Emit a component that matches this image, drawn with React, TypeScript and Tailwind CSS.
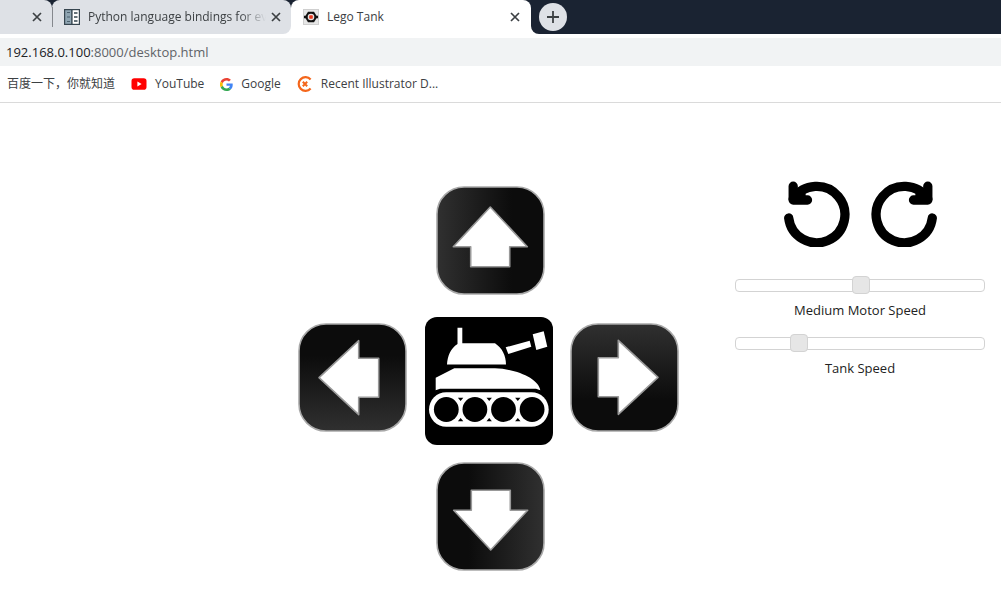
import { useState } from "react";

function Close({ label }: { label: string }) {
  return (
    <button type="button" aria-label={label} className="flex size-4 shrink-0 items-center justify-center">
      <svg viewBox="0 0 10 10" className="size-[10px]" fill="none" stroke="#3c4043" strokeWidth="1.7">
        <path d="M1 1l8 8M9 1l-8 8" />
      </svg>
    </button>
  );
}

function DocsIcon() {
  return (
    <svg viewBox="0 0 16 16" className="size-4 shrink-0">
      <rect width="16" height="16" fill="#36454f" />
      <rect x="1.2" y="1.2" width="6" height="13.6" fill="#8fa5b2" />
      <rect x="8.6" y="1.2" width="6.2" height="13.6" fill="#fff" />
      <path d="M3 3.5h3M3 8h3M3 12.5h3" stroke="#4d616e" strokeWidth="1.2" />
      <path d="M10 4h3.5M10 8h3.5M10 12h3.5" stroke="#36454f" strokeWidth="1.6" />
    </svg>
  );
}

function RobotIcon() {
  return (
    <svg viewBox="0 0 16 16" className="size-4 shrink-0">
      <rect x="0.5" y="0.5" width="15" height="15" fill="#e6e6e6" stroke="#cfcfcf" />
      <path d="M1 6.800h1.500L5 2.800h6l2.500 4H15v2.400h-1.500L11 13.200H5L2.500 9.200H1z" fill="#111" />
      <circle cx="8" cy="8" r="3.3" fill="#e9e2e0" />
      <rect x="6.200" y="6.200" width="3.600" height="3.600" rx="0.8" fill="#e8361c" />
    </svg>
  );
}

function YouTubeIcon() {
  return (
    <svg viewBox="0 0 16 16" className="size-4 shrink-0">
      <rect x="0.5" y="2.300" width="15" height="11.400" rx="2.800" fill="#f00" />
      <path d="M6.400 5.600v4.800L10.600 8z" fill="#fff" />
    </svg>
  );
}

function GoogleIcon() {
  return (
    <svg viewBox="0 0 48 48" className="size-[13px] shrink-0">
      <path fill="#EA4335" d="M24 9.500c3.540 0 6.710 1.220 9.210 3.600l6.850-6.850C35.900 2.380 30.470 0 24 0 14.620 0 6.510 5.380 2.560 13.220l7.980 6.190C12.430 13.720 17.740 9.500 24 9.500z" />
      <path fill="#4285F4" d="M46.980 24.550c0-1.570-.15-3.090-.38-4.550H24v9.020h12.940c-.58 2.960-2.260 5.480-4.780 7.180l7.730 6c4.510-4.180 7.090-10.360 7.090-17.650z" />
      <path fill="#FBBC05" d="M10.530 28.590a14.500 14.500 0 0 1 0-9.180l-7.980-6.190a24 24 0 0 0 0 21.560l7.980-6.190z" />
      <path fill="#34A853" d="M24 48c6.480 0 11.930-2.130 15.890-5.810l-7.730-6c-2.150 1.450-4.920 2.300-8.160 2.300-6.260 0-11.570-4.220-13.470-9.910l-7.980 6.190C6.510 42.620 14.620 48 24 48z" />
    </svg>
  );
}

function DesignIcon() {
  return (
    <svg viewBox="0 0 16 16" className="size-4 shrink-0" fill="none" stroke="#f4661b">
      <path d="M13.600 3.500A6.800 6.800 0 1 0 13.600 12.500" strokeWidth="2.200" />
      <path d="M5.800 5.800l4.400 4.400M10.200 5.800l-4.400 4.400" strokeWidth="2" />
    </svg>
  );
}

type Turn = "up" | "right" | "down" | "left";

const turns: Record<Turn, string> = {
  up: "rotate-0",
  right: "rotate-90",
  down: "rotate-180",
  left: "-rotate-90",
};

function ArrowButton({ turn, label }: { turn: Turn; label: string }) {
  const id = `shade-${turn}`;
  return (
    <button type="button" aria-label={label} className="block size-[109px]">
      <svg viewBox="0 0 109 109" className={`block size-full ${turns[turn]}`}>
        <defs>
          <linearGradient id={id} x1="0" x2="1" y1="0" y2="0">
            <stop offset="0" stopColor="#303030" />
            <stop offset="0.7" stopColor="#0c0c0c" />
            <stop offset="1" stopColor="#0c0c0c" />
          </linearGradient>
        </defs>
        <rect x="1" y="1" width="107" height="107" rx="27" fill={`url(#${id})`} stroke="#a8a8a8" strokeWidth="1.600" />
        <path
          d="M54.300 21L91.300 60.700H73.700V80.700H34.700V60.700H17.300z"
          fill="#fff"
          stroke="#999"
          strokeWidth="1.600"
          strokeLinejoin="round"
        />
      </svg>
    </button>
  );
}

const wheels = [21.3, 49.9, 78.5, 107.1];
const gaps = [35.6, 64.2, 92.8];

function Tank() {
  return (
    <svg viewBox="0 0 128 128" className="block size-32" role="img" aria-label="Tank">
      <rect width="128" height="128" rx="12" fill="#000" />
      <g fill="#fff">
        <path d="M32.500 10.700h4.800V26.200H70C77 31 81 38 81 47.600H22C22.500 39 25.500 31.500 32.500 27z" />
        <path d="M80.700 30.300L104.700 23.700L106.300 29.700L83.300 37z" />
        <path d="M107.700 17.300L118.700 14.300L122.300 29.700L111.300 33z" />
        <path d="M10.700 60.700L29.300 51.300H70C92 52 114 62 115.300 73.300L111 71.700H15L10.700 73.300z" />
        <rect x="4" y="75.300" width="119.700" height="34.400" rx="17.200" />
      </g>
      {wheels.map((x) => (
        <circle key={x} cx={x} cy="92.500" r="12.400" fill="#000" />
      ))}
      {gaps.map((x) => (
        <path key={x} d={`M${x - 2.7} 80.800h5.400l-2.700 3.200zM${x - 2.7} 104.200h5.400l-2.700-3.200z`} fill="#000" />
      ))}
    </svg>
  );
}

function TurnButton({ label, mirrored }: { label: string; mirrored?: boolean }) {
  return (
    <button type="button" aria-label={label}>
      <svg
        viewBox="0 0 66 66"
        className={mirrored ? "block size-[66px] -scale-x-100" : "block size-[66px]"}
        fill="none"
        stroke="#000"
        strokeWidth="9.300"
        strokeLinecap="round"
        strokeLinejoin="round"
      >
        <path d="M4.700 37A28.200 28.200 0 1 0 9.200 18" />
        <path d="M9.200 5.200V19H23.500M9.200 19L17 10.500V19z" />
      </svg>
    </button>
  );
}

function Slider({ id, label, initial }: { id: string; label: string; initial: number }) {
  const [value, setValue] = useState(initial);
  return (
    <div className="flex w-full flex-col items-center gap-[5px]">
      <input
        id={id}
        type="range"
        min={0}
        max={100}
        step={0.5}
        value={value}
        onChange={(e) => setValue(Number(e.target.value))}
        className="block h-[19px] w-full appearance-none bg-transparent [&::-webkit-slider-runnable-track]:h-[13px] [&::-webkit-slider-runnable-track]:rounded [&::-webkit-slider-runnable-track]:border [&::-webkit-slider-runnable-track]:border-[#d3d3d3] [&::-webkit-slider-runnable-track]:bg-white [&::-webkit-slider-thumb]:-mt-1 [&::-webkit-slider-thumb]:size-[18px] [&::-webkit-slider-thumb]:appearance-none [&::-webkit-slider-thumb]:rounded [&::-webkit-slider-thumb]:border [&::-webkit-slider-thumb]:border-[#d3d3d3] [&::-webkit-slider-thumb]:bg-[#e6e6e6]"
      />
      <label htmlFor={id} className="text-[13px] leading-5 text-[#222]">
        {label}
      </label>
    </div>
  );
}

export default function App() {
  return (
    <div className="min-h-screen bg-white font-['Open_Sans','Noto_Sans_CJK_SC',sans-serif] text-xs text-[#3c4043]">
      <header className="border-b border-[#dadada]">
        <div className="flex h-[34px] overflow-hidden bg-[#1a2332]">
          <div className="flex w-[52px] items-center justify-end rounded-tr-lg bg-[#dee1e6] pr-[7px]">
            <Close label="Close tab" />
          </div>
          <div className="flex bg-[linear-gradient(to_bottom,#1a2332_50%,#ffffff_50%)]">
            <div className="flex w-[239px] items-center rounded-t-lg rounded-br-lg bg-[linear-gradient(#dee1e6,#dee1e6)] pr-[7px]">
              <span className="h-5 w-px bg-[#85888d]" />
              <span className="ml-[11px]">
                <DocsIcon />
              </span>
              <span className="ml-2 min-w-0 flex-1 overflow-hidden whitespace-nowrap [mask-image:linear-gradient(to_right,#000_152px,transparent_178px)]">
                Python language bindings for ev3
              </span>
              <Close label="Close Python language bindings" />
            </div>
          </div>
          <div className="flex w-60 items-center rounded-t-lg bg-white pr-2 pl-3">
            <RobotIcon />
            <span className="ml-2 flex-1">Lego Tank</span>
            <Close label="Close Lego Tank" />
          </div>
          <div className="flex flex-1 bg-[linear-gradient(to_bottom,#1a2332_50%,#ffffff_50%)]">
            <div className="flex flex-1 items-center rounded-bl-lg bg-[#1a2332] pl-2">
              <button
                type="button"
                aria-label="New tab"
                className="flex size-7 items-center justify-center rounded-full bg-[#dee1e6]"
              >
                <svg viewBox="0 0 12 12" className="size-3" stroke="#3c4043" strokeWidth="1.800">
                  <path d="M6 0v12M0 6h12" />
                </svg>
              </button>
            </div>
          </div>
        </div>
        <div className="mt-1 flex h-7 items-center bg-[#f1f3f4] px-[6px] pt-px text-[13px]">
          <span className="text-[#202124]">192.168.0.100</span>
          <span className="text-[#5f6368]">:8000/desktop.html</span>
        </div>
        <nav className="flex h-9 items-center px-[7px]">
          <a href="#baidu">百度一下，你就知道</a>
          <a href="#youtube" className="ml-4 flex items-center gap-2">
            <YouTubeIcon />
            YouTube
          </a>
          <a href="#google" className="ml-4 flex items-center gap-2">
            <GoogleIcon />
            Google
          </a>
          <a href="#designs" className="ml-4 flex items-center gap-2">
            <DesignIcon />
            Recent Illustrator D...
          </a>
        </nav>
      </header>

      <main className="flex justify-end gap-14 pr-4">
        <section aria-label="Drive" className="mt-[83px] grid shrink-0 grid-cols-[127px_128px_126px] grid-rows-[131px_128px_126px]">
          <div className="col-start-2 pl-[11px]">
            <ArrowButton turn="up" label="Forward" />
          </div>
          <div className="col-start-1 row-start-2 pt-[6px]">
            <ArrowButton turn="left" label="Left" />
          </div>
          <div className="col-start-2 row-start-2">
            <Tank />
          </div>
          <div className="col-start-3 row-start-2 flex justify-end pt-[6px]">
            <ArrowButton turn="right" label="Right" />
          </div>
          <div className="col-start-2 row-start-3 flex items-end pl-[11px]">
            <ArrowButton turn="down" label="Backward" />
          </div>
        </section>

        <section aria-label="Motors" className="mt-[78px] flex w-[250px] shrink-0 flex-col items-center">
          <div className="mb-[29px] flex gap-[21px]">
            <TurnButton label="Turn turret left" />
            <TurnButton label="Turn turret right" mirrored />
          </div>
          <div className="flex w-full flex-col gap-[14px]">
            <Slider id="medium" label="Medium Motor Speed" initial={50.5} />
            <Slider id="tank" label="Tank Speed" initial={23.5} />
          </div>
        </section>
      </main>
    </div>
  );
}
